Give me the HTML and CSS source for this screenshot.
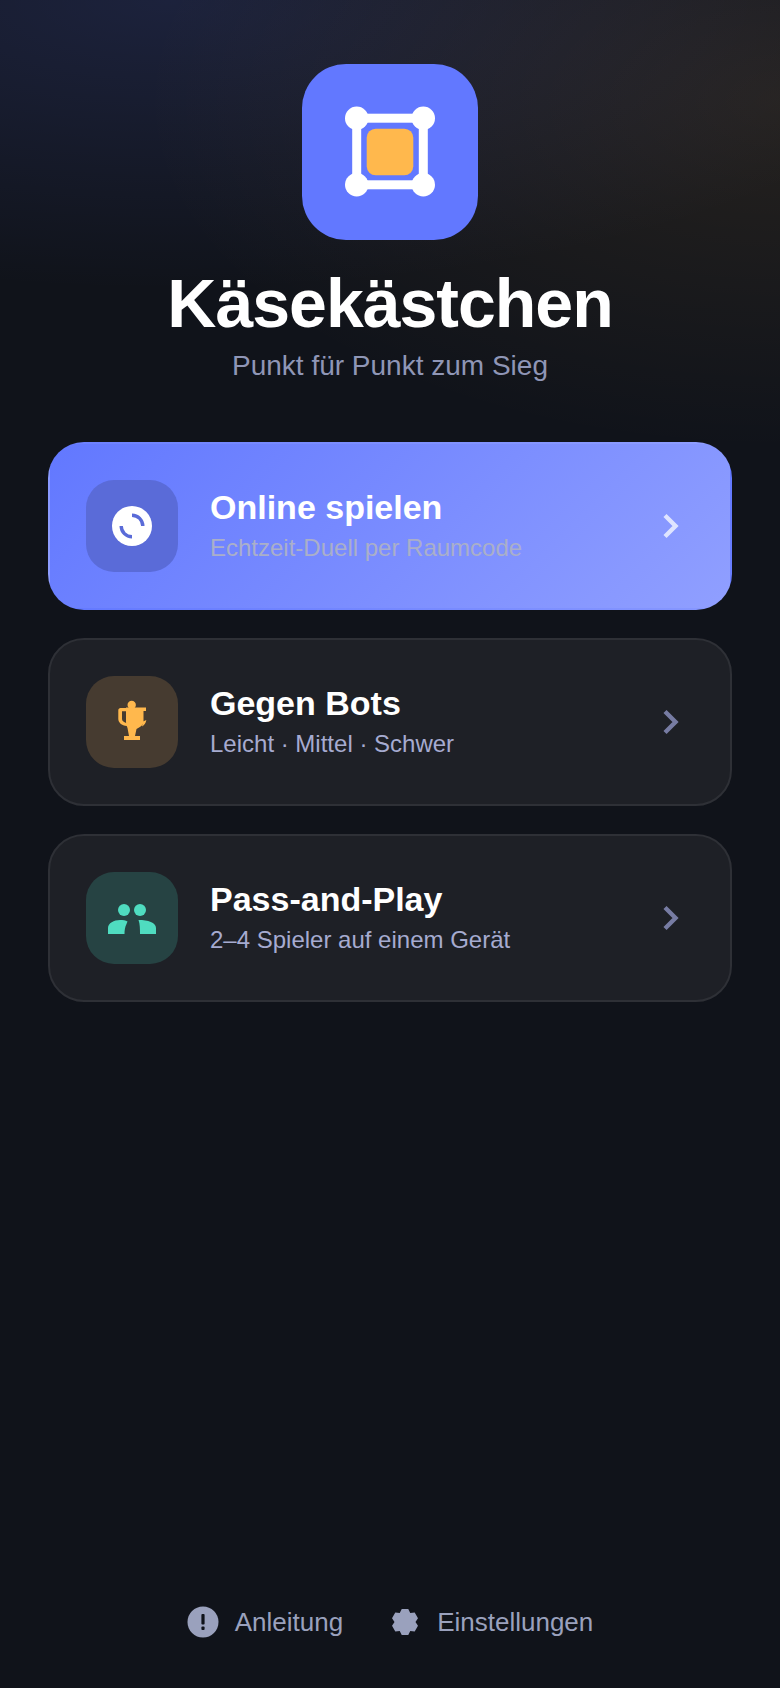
FILE: index.html
```html
<!DOCTYPE html>
<html lang="de">
<head>
<meta charset="utf-8">
<title>Käsekästchen</title>
<link rel="stylesheet" href="styles.css">
</head>
<body>
<div class="screen">
  <header class="hero">
    <div class="logo">
      <svg width="176" height="176" viewBox="0 0 176 176">
        <rect class="logo-fill" x="64.7" y="64.7" width="46.6" height="46.6" rx="9"/>
        <rect class="logo-line" x="54.7" y="54.2" width="66.6" height="66.6"/>
        <circle class="logo-dot" cx="54.7" cy="54.2" r="11.7"/>
        <circle class="logo-dot" cx="121.3" cy="54.2" r="11.7"/>
        <circle class="logo-dot" cx="54.7" cy="120.8" r="11.7"/>
        <circle class="logo-dot" cx="121.3" cy="120.8" r="11.7"/>
      </svg>
    </div>
    <h1 class="title">Käsekästchen</h1>
    <p class="subtitle">Punkt für Punkt zum Sieg</p>
  </header>

  <nav class="menu">
    <a class="card card-primary">
      <span class="badge badge-primary">
        <svg width="92" height="92" viewBox="0 0 92 92">
          <circle cx="46" cy="46" r="20" fill="#fff"/>
          <path class="spin" d="M46 35.2 A10.8 10.8 0 0 1 56.8 46"/>
          <path class="spin" d="M35.2 46 A10.8 10.8 0 0 0 46 56.8"/>
        </svg>
      </span>
      <span class="text">
        <span class="name">Online spielen</span>
        <span class="desc desc-primary">Echtzeit-Duell per Raumcode</span>
      </span>
      <svg class="chev chev-primary" width="20" height="28" viewBox="0 0 20 28"><path d="M4 3.5 L14.5 14 L4 24.5"/></svg>
    </a>

    <a class="card">
      <span class="badge badge-bots">
        <svg width="92" height="92" viewBox="0 0 92 92">
          <g fill="#ffb84d">
            <circle cx="45.7" cy="29" r="4.2"/>
            <path d="M40 31.5 H60 V35 H57.5 V46 C57.5 49 54 51 50.5 53 L49 60 H43 L41.5 52 C40.5 50 40 48 40 46 Z"/>
            <path d="M38 60 H54 V64 H38 Z"/>
            <path d="M34.5 32 H41 V35.3 H36 V43 C36 45 38 46.5 41 47.2 V50 C35.5 49.5 32.3 46.5 32.3 43 V34.2 C32.3 33 33.3 32 34.5 32 Z"/>
            <path d="M57 45.5 L60.3 44 C60 47 58.5 49 56 50.5 Z"/>
          </g>
        </svg>
      </span>
      <span class="text">
        <span class="name">Gegen Bots</span>
        <span class="desc">Leicht · Mittel · Schwer</span>
      </span>
      <svg class="chev" width="20" height="28" viewBox="0 0 20 28"><path d="M4 3.5 L14.5 14 L4 24.5"/></svg>
    </a>

    <a class="card">
      <span class="badge badge-pass">
        <svg width="92" height="92" viewBox="0 0 92 92">
          <g fill="#4fdcc0">
            <circle cx="38" cy="38" r="6"/>
            <circle cx="54" cy="38" r="6"/>
            <path d="M22 62 V56 C22 51 28 48 34 48 C37 48 39.5 48.3 41.5 49.5 L40.5 52 C39 55 38.5 58 38.5 62 Z"/>
            <path d="M52.5 48 C62 48 70 50.5 70 56 V62 H54 C54 57 54 52 52.5 48 Z"/>
          </g>
        </svg>
      </span>
      <span class="text">
        <span class="name">Pass-and-Play</span>
        <span class="desc">2–4 Spieler auf einem Gerät</span>
      </span>
      <svg class="chev" width="20" height="28" viewBox="0 0 20 28"><path d="M4 3.5 L14.5 14 L4 24.5"/></svg>
    </a>
  </nav>

  <footer class="foot">
    <a class="foot-link">
      <svg width="32" height="32" viewBox="0 0 32 32">
        <circle class="foot-icon" cx="16" cy="16" r="15.5"/>
        <rect class="foot-mark" x="14.4" y="8" width="3.2" height="10.5" rx="1"/>
        <rect class="foot-mark" x="14.4" y="20.6" width="3.2" height="3.4" rx="1"/>
      </svg>
      <span>Anleitung</span>
    </a>
    <a class="foot-link">
      <svg width="32" height="32" viewBox="0 0 32 32">
        <path class="foot-icon" d="M12.73 2.9 L19.27 2.9 L21.25 6.91 L25.71 6.62 L28.98 12.28 L26.5 16 L28.98 19.72 L25.71 25.38 L21.25 25.09 L19.27 29.1 L12.73 29.1 L10.75 25.09 L6.29 25.38 L3.02 19.72 L5.5 16 L3.02 12.28 L6.29 6.62 L10.75 6.91 Z"/>
      </svg>
      <span>Einstellungen</span>
    </a>
  </footer>
</div>
</body>
</html>
```

FILE: styles.css
```css
* { box-sizing: border-box; }
html, body { margin: 0; padding: 0; }
body {
  background: #10131a;
  font-family: "Liberation Sans", Arial, sans-serif;
  color: #fff;
}
.screen {
  width: 780px;
  height: 1688px;
  display: flex;
  flex-direction: column;
  padding: 64px 48px 0;
  background:
    radial-gradient(ellipse 640px 350px at 780px 100px, rgba(255, 184, 77, 0.09), rgba(255, 184, 77, 0) 100%),
    radial-gradient(ellipse 800px 290px at 170px 0, rgba(98, 120, 255, 0.15), rgba(98, 120, 255, 0) 100%),
    #10131a;
}
.hero {
  display: flex;
  flex-direction: column;
  align-items: center;
}
.logo {
  width: 176px;
  height: 176px;
  border-radius: 44px;
  background: #6278ff;
}
.logo svg { display: block; }
.logo-fill { fill: #ffb84d; }
.logo-line { fill: none; stroke: #fff; stroke-width: 9; }
.logo-dot { fill: #fff; }
.title {
  margin: 22px 0 0;
  font-size: 68px;
  line-height: 82px;
  font-weight: 700;
  letter-spacing: -1px;
}
.subtitle {
  margin: 6px 0 0;
  font-size: 28px;
  line-height: 32px;
  color: #8f96b6;
}
.menu {
  display: flex;
  flex-direction: column;
  gap: 28px;
  margin-top: 60px;
}
.card {
  display: flex;
  align-items: center;
  height: 168px;
  padding: 0 36px;
  border: 2px solid #2e3036;
  border-radius: 36px;
  background: #1e2026;
}
.card-primary {
  border-color: transparent;
  background: linear-gradient(135deg, #6278ff, #909fff);
}
.badge {
  flex: none;
  width: 92px;
  height: 92px;
  border-radius: 28px;
}
.badge svg { display: block; }
.badge-primary { background: #5a6bd8; }
.badge-bots { background: #463b30; }
.badge-pass { background: #264343; }
.spin { fill: none; stroke: #5a6bd8; stroke-width: 3.4; }
.text {
  flex: 1;
  display: flex;
  flex-direction: column;
  gap: 5px;
  margin-left: 32px;
  padding-bottom: 3px;
}
.name {
  font-size: 34px;
  line-height: 42px;
  font-weight: 700;
}
.desc {
  font-size: 24px;
  line-height: 30px;
  color: #a6abd0;
}
.desc-primary { color: #aaafc9; }
.chev { flex: none; margin-right: 13px; }
.chev path { fill: none; stroke: #777ca3; stroke-width: 4.4; }
.chev-primary path { stroke: #dfe4ff; }
.foot {
  margin-top: auto;
  margin-bottom: 48px;
  display: flex;
  justify-content: center;
  gap: 46px;
}
.foot-link {
  display: flex;
  align-items: center;
  gap: 16px;
  font-size: 26px;
  line-height: 36px;
  color: #9aa1bd;
}
.foot-link svg { display: block; }
.foot-icon { fill: #9aa1bd; }
.foot-mark { fill: #10131a; }
```
